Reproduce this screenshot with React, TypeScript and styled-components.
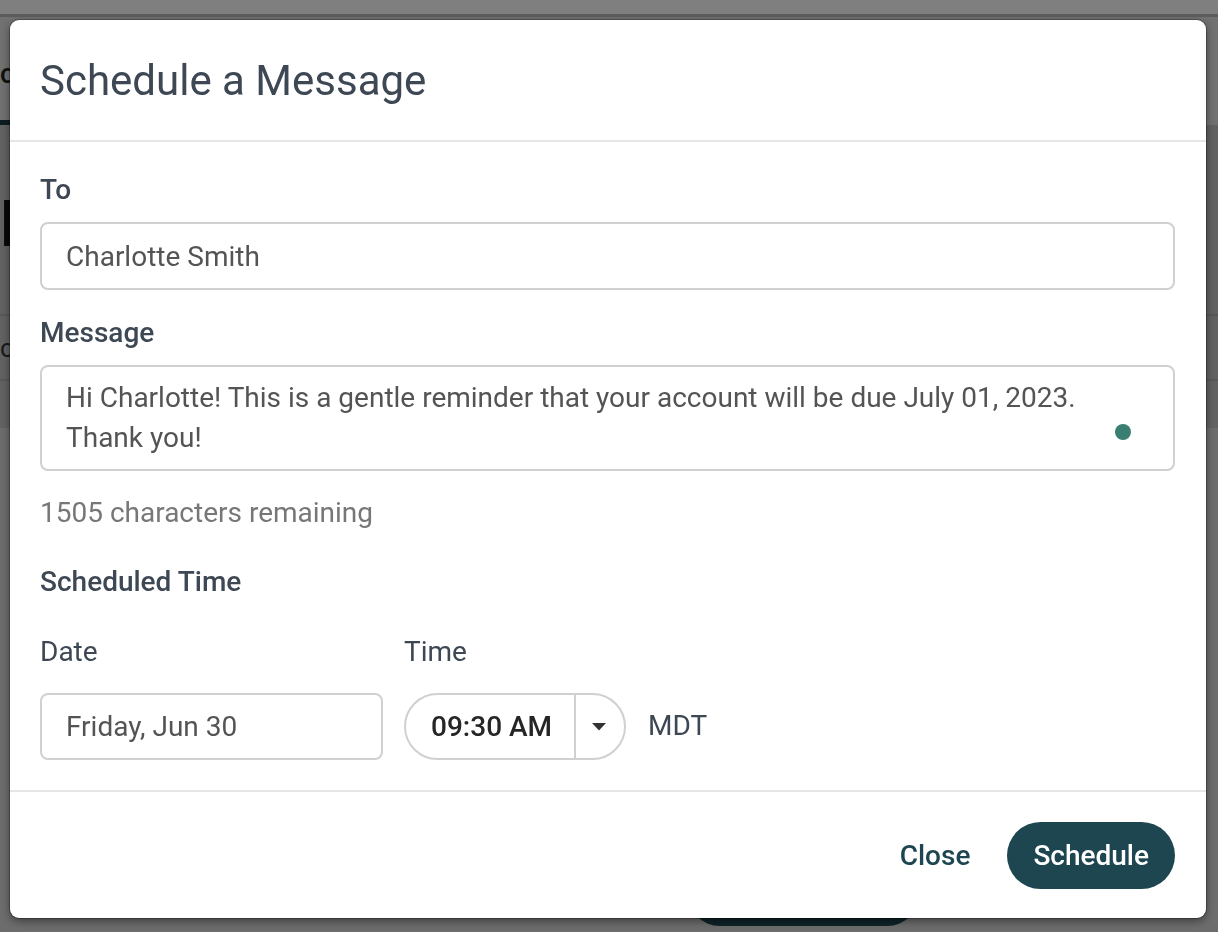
import React from "react";
import styled, { createGlobalStyle } from "styled-components";

const GlobalStyle = createGlobalStyle`
  * {
    box-sizing: border-box;
  }
  html,
  body {
    margin: 0;
    padding: 0;
    height: 100%;
    overflow: hidden;
    font-family: Roboto, "Liberation Sans", Arial, sans-serif;
    background: #d9d9d9;
  }
`;

/* page behind the dialog */

const Page = styled.div`
  height: 932px;
  display: flex;
  flex-direction: column;
  background: #d9d9d9;
`;

const TopBar = styled.div`
  height: 17px;
  background: #ffffff;
  border-bottom: 3px solid #b9b9b9;
`;

const TabRow = styled.div`
  height: 108px;
  display: flex;
  align-items: stretch;
  background: #e2e2e2;
`;

const Tab = styled.div<{ $active?: boolean }>`
  display: flex;
  align-items: center;
  padding: 10px 24px 0 0;
  font-size: 28px;
  font-weight: 500;
  color: #222;
  border-bottom: 5px solid ${(p) => (p.$active ? "#163a42" : "transparent")};
`;

const Panel = styled.div`
  height: 303px;
  display: flex;
  flex-direction: column;
  background: #c4c4c4;
`;

const PageHeading = styled.h1`
  margin: 60px 0 0;
  font-size: 64px;
  line-height: 80px;
  font-weight: 700;
  color: #111;
`;

const TableRow = styled.div`
  margin-top: 49px;
  height: 67px;
  display: flex;
  align-items: center;
  border-top: 2px solid #b0b0b0;
  border-bottom: 2px solid #b0b0b0;
  font-size: 26px;
  color: #333;
`;

const PageFooter = styled.div`
  margin-top: auto;
  padding: 0 0 6px 687px;
  display: flex;
`;

const PageButton = styled.div`
  width: 233px;
  height: 66px;
  border-radius: 33px;
  background: #1d4650;
`;

/* dialog */

const Overlay = styled.div`
  position: fixed;
  inset: 0;
  background: rgba(0, 0, 0, 0.5);
  padding: 20px 12px 14px 10px;
  display: flex;
  align-items: flex-start;
`;

const Modal = styled.div`
  width: 100%;
  background: #ffffff;
  border-radius: 9px;
  box-shadow: 0 0 0 1px rgba(0, 0, 0, 0.25), 0 3px 8px rgba(0, 0, 0, 0.45);
  display: flex;
  flex-direction: column;
  color: #3d4854;
`;

const Header = styled.div`
  height: 122px;
  display: flex;
  align-items: center;
  padding: 0 30px;
  border-bottom: 2px solid #e6e6e6;
`;

const Title = styled.h2`
  margin: 0;
  font-size: 42px;
  font-weight: 400;
  color: #3d4854;
`;

const Body = styled.div`
  padding: 31px 31px 30px 30px;
  display: flex;
  flex-direction: column;
`;

const Label = styled.div<{ $gap?: number; $after?: number }>`
  font-size: 28px;
  line-height: 34px;
  font-weight: 500;
  color: #3d4854;
  margin-top: ${(p) => p.$gap ?? 0}px;
  margin-bottom: ${(p) => p.$after ?? 15}px;
`;

const Field = styled.div<{ $height?: number }>`
  height: ${(p) => p.$height ?? 68}px;
  display: flex;
  align-items: center;
  padding: 0 24px;
  border: 2px solid #d0d0d0;
  border-radius: 8px;
  font-size: 28px;
  color: #545454;
  background: #fff;
`;

const TextArea = styled.div`
  position: relative;
  height: 106px;
  padding: 11px 24px;
  border: 2px solid #d0d0d0;
  border-radius: 8px;
  font-size: 28px;
  line-height: 40px;
  color: #545454;
`;

const StatusDot = styled.span`
  position: absolute;
  right: 42px;
  bottom: 29px;
  width: 16px;
  height: 16px;
  border-radius: 50%;
  background: #3a7f72;
`;

const Helper = styled.div`
  margin-top: 25px;
  font-size: 28px;
  line-height: 34px;
  color: #777;
`;

const TimeRow = styled.div`
  margin-top: 36px;
  display: flex;
  gap: 21px;
  align-items: flex-start;
`;

const Column = styled.div<{ $width?: number }>`
  display: flex;
  flex-direction: column;
  width: ${(p) => (p.$width ? `${p.$width}px` : "auto")};
`;

const ColumnLabel = styled.div`
  font-size: 28px;
  line-height: 34px;
  color: #3d4854;
  margin-bottom: 24px;
`;

const TimeLine = styled.div`
  display: flex;
  align-items: center;
  gap: 22px;
`;

const TimePill = styled.div`
  width: 222px;
  height: 67px;
  display: flex;
  align-items: stretch;
  border: 2px solid #d0d0d0;
  border-radius: 34px;
`;

const TimeValue = styled.div`
  flex: 1;
  display: flex;
  align-items: center;
  padding-left: 25px;
  font-size: 28px;
  font-weight: 500;
  color: #262626;
  border-right: 2px solid #d0d0d0;
`;

const CaretBox = styled.div`
  width: 48px;
  display: flex;
  align-items: center;
  justify-content: center;
  padding-right: 2px;
`;

const Zone = styled.div`
  font-size: 28px;
  color: #3d4854;
  padding-bottom: 2px;
`;

const Footer = styled.div`
  height: 128px;
  border-top: 2px solid #e6e6e6;
  display: flex;
  align-items: center;
  justify-content: flex-end;
  gap: 12px;
  padding: 0 31px 0 30px;
`;

const TextButton = styled.button`
  border: none;
  background: none;
  padding: 0 25px;
  height: 67px;
  font-family: inherit;
  font-size: 28px;
  font-weight: 500;
  color: #1d4650;
  cursor: pointer;
`;

const PrimaryButton = styled.button`
  border: none;
  height: 67px;
  padding: 0 26px;
  border-radius: 34px;
  background: #1d4650;
  color: #ffffff;
  font-family: inherit;
  font-size: 28px;
  font-weight: 500;
  cursor: pointer;
`;

export default function App() {
  return (
    <>
      <GlobalStyle />
      <Page>
        <TopBar />
        <TabRow>
          <Tab $active>conversations</Tab>
        </TabRow>
        <Panel>
          <PageHeading>Messages</PageHeading>
          <TableRow>contacts</TableRow>
        </Panel>
        <PageFooter>
          <PageButton />
        </PageFooter>
      </Page>

      <Overlay>
        <Modal>
          <Header>
            <Title>Schedule a Message</Title>
          </Header>

          <Body>
            <Label>To</Label>
            <Field>Charlotte Smith</Field>

            <Label $gap={26}>Message</Label>
            <TextArea>
              Hi Charlotte! This is a gentle reminder that your account will be
              due July 01, 2023.
              <br />
              Thank you!
              <StatusDot />
            </TextArea>

            <Helper>1505 characters remaining</Helper>

            <Label $gap={35} $after={0}>
              Scheduled Time
            </Label>

            <TimeRow>
              <Column $width={343}>
                <ColumnLabel>Date</ColumnLabel>
                <Field $height={67}>Friday, Jun 30</Field>
              </Column>
              <Column>
                <ColumnLabel>Time</ColumnLabel>
                <TimeLine>
                  <TimePill>
                    <TimeValue>09:30 AM</TimeValue>
                    <CaretBox>
                      <svg width="14" height="8" viewBox="0 0 14 8">
                        <path d="M0 0h14L7 7.5z" fill="#333" />
                      </svg>
                    </CaretBox>
                  </TimePill>
                  <Zone>MDT</Zone>
                </TimeLine>
              </Column>
            </TimeRow>
          </Body>

          <Footer>
            <TextButton>Close</TextButton>
            <PrimaryButton>Schedule</PrimaryButton>
          </Footer>
        </Modal>
      </Overlay>
    </>
  );
}
